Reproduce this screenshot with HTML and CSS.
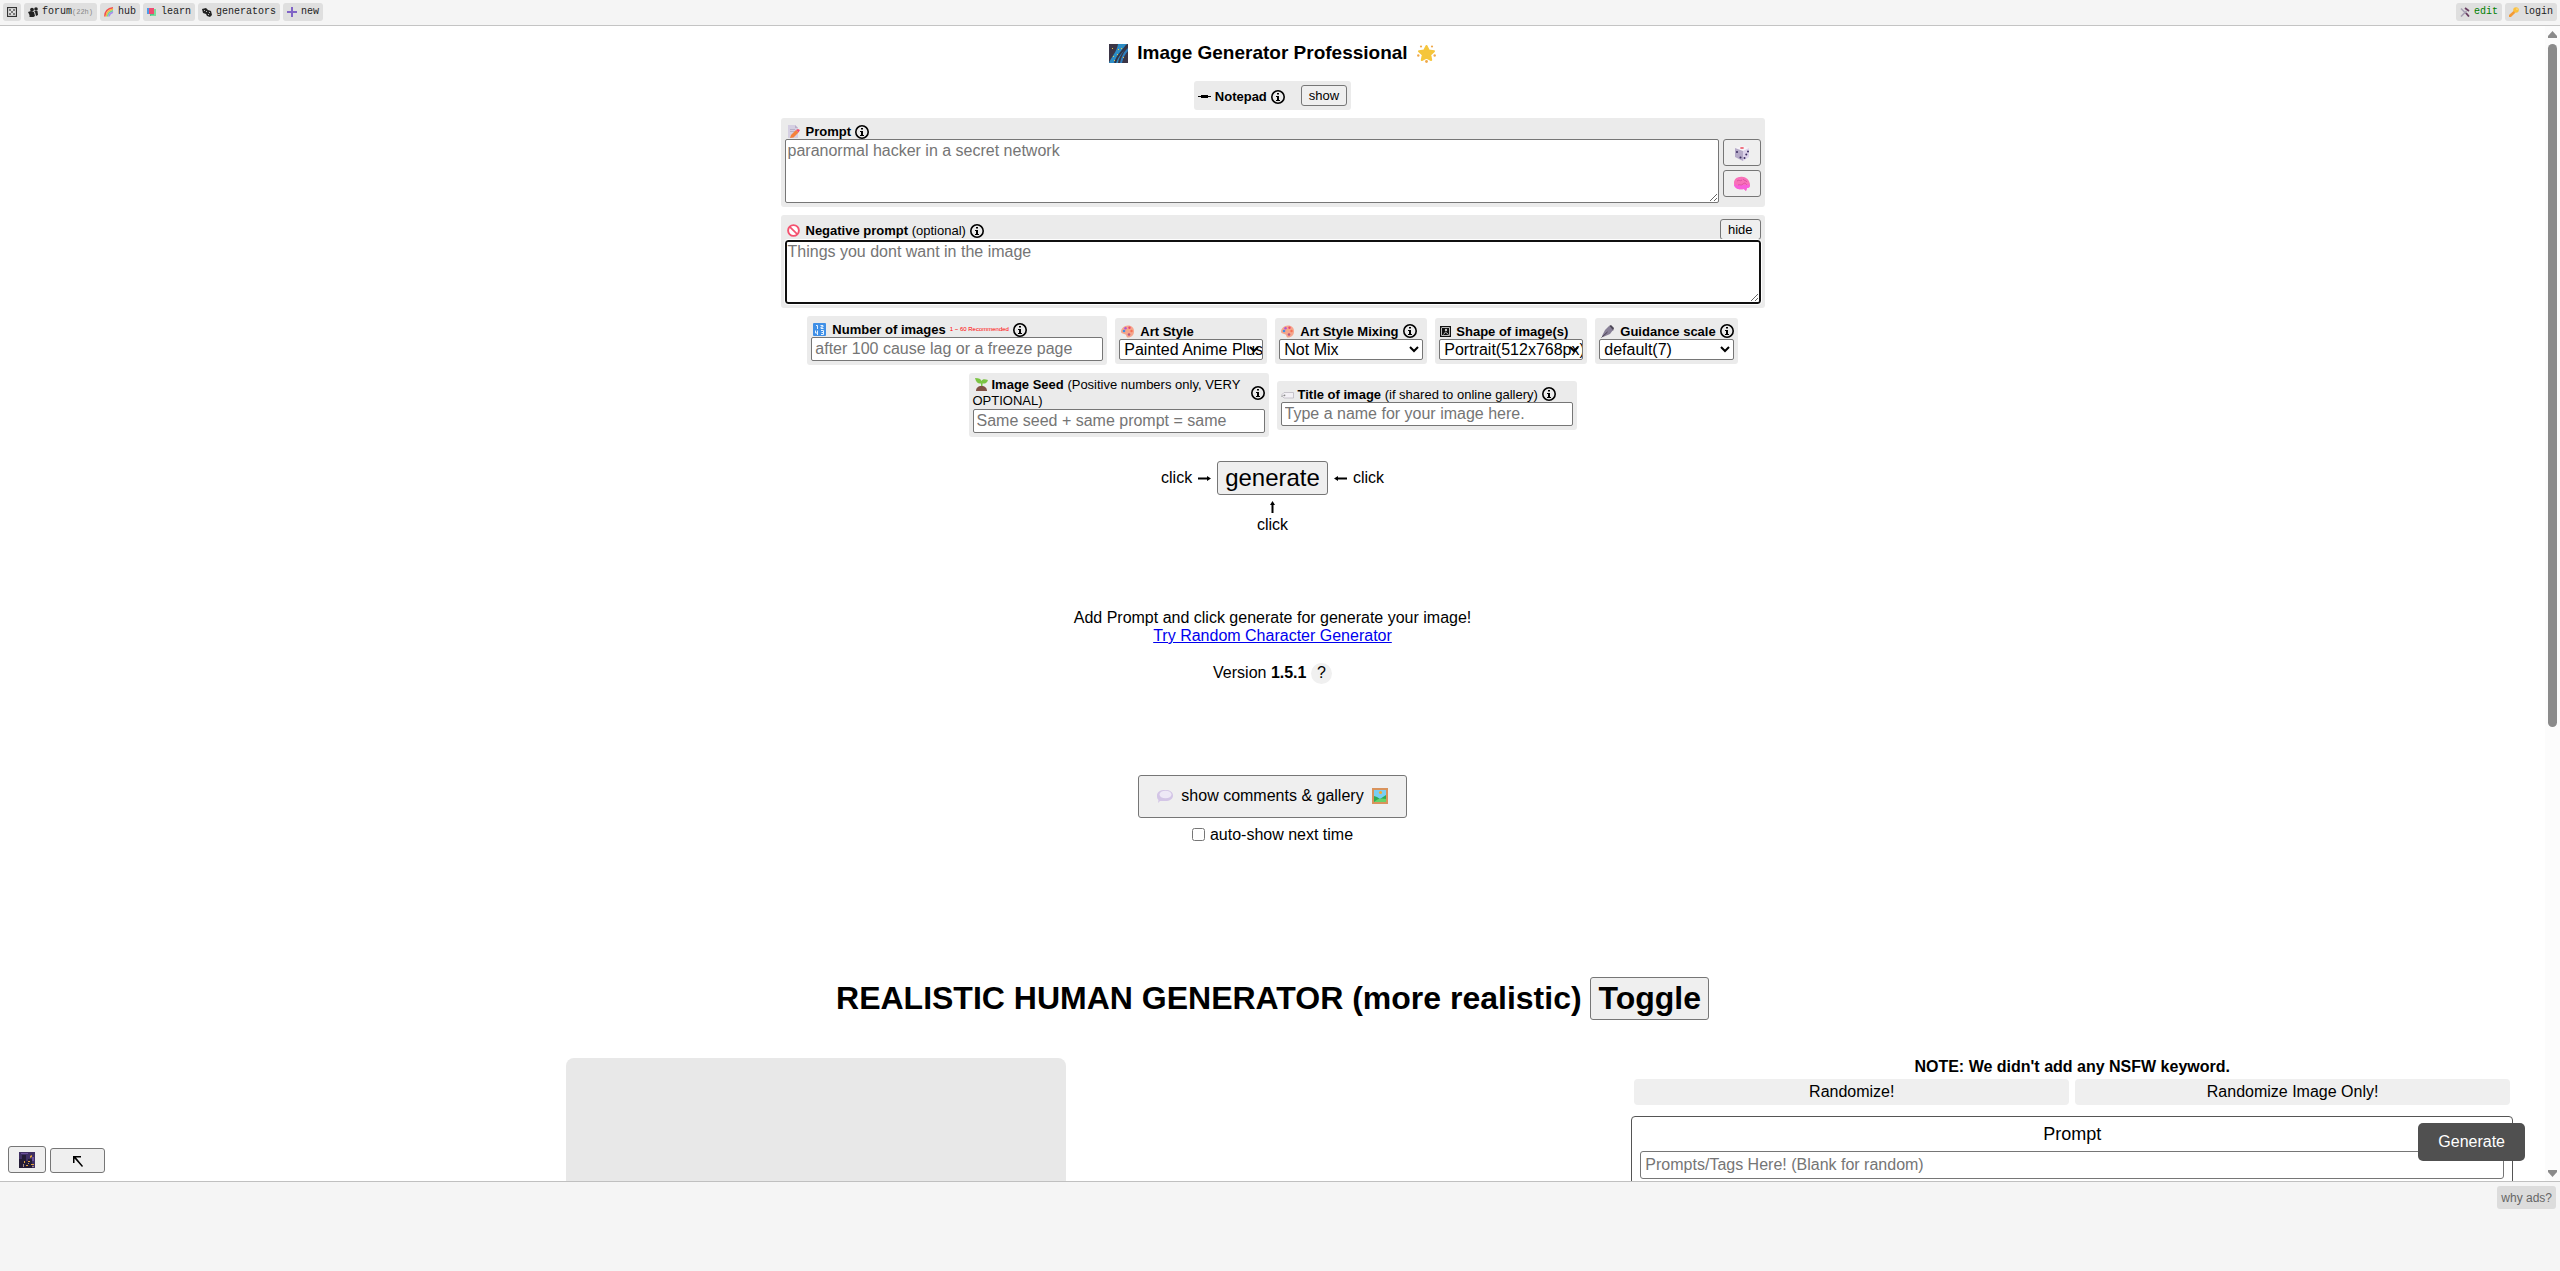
FILE: index.html
```html
<!DOCTYPE html>
<html lang="en">
<head>
  <meta charset="UTF-8">
  <meta name="viewport" content="width=device-width, initial-scale=1.0">
  <title>Image Generator Professional</title>
  <link rel="stylesheet" href="styles.css">
</head>
<body>
  <!-- shared icons -->
  <svg class="sprite" aria-hidden="true">
    <symbol id="info" viewBox="0 0 14 14"><circle cx="7" cy="7" r="6.2" fill="none" stroke="#000" stroke-width="1.6"/><path d="M6 3h2v1.6H6zM5 6h3v4h1v1H5v-1h1V7H5z"/></symbol>
    <symbol id="die" viewBox="0 0 9 9"><rect x=".5" y=".5" width="8" height="8" fill="none" stroke="#333"/><path fill="#333" d="M2 2h1.4v1.4H2zM5.600 2H7v1.400H5.600zM2 5.600h1.400V7H2zM5.600 5.600H7V7H5.600zM3.800 3.800h1.400v1.400H3.800z"/></symbol>
    <symbol id="people" viewBox="0 0 10 10"><g fill="#222"><circle cx="4" cy="2.600" r="1.900"/><circle cx="8" cy="2" r="1.800"/><path d="M0 5l3-1 3 1 1 4-1.500 1H1.500V8zM6 4h3.500l.5 4-2 1-1-4z"/></g></symbol>
    <symbol id="rainbow" viewBox="0 0 10 10"><g fill="none" stroke-width="1.500"><path stroke="#f2504f" d="M.8 9.500Q.8 2 9 .8"/><path stroke="#fbb53c" d="M2.200 9.500Q2.500 3.500 9 2.300"/><path stroke="#6cd49a" d="M3.600 9.500Q4 5 9 3.800"/><path stroke="#a98cf0" d="M5 9.500Q5.500 6 9 5.200"/></g></symbol>
    <symbol id="books" viewBox="0 0 10 10"><path fill="#4a9be8" d="M0 1h4v6H0z"/><path fill="#53c58a" d="M3 3h6v6H3z"/><path fill="#ef4d72" d="M2 1h5v6H2z"/><path fill="#7bdc9b" d="M7 2h2v7H4V8h3z"/></symbol>
    <symbol id="generators" viewBox="0 0 10 10"><path fill="#222" d="M0 2l4-1 2 2 3 1 1 4-2 2-3-1-1-2-3-1z"/><path fill="#bbb" d="M2 3h1v1H2zM4 4h1v1H4zM7 5h1v1H7zM6 7h1v1H6z"/></symbol>
    <symbol id="plus" viewBox="0 0 10 10"><path fill="#8064c6" d="M4 0h2v4h4v2H6v4H4V6H0V4h4z"/></symbol>
    <symbol id="tools" viewBox="0 0 10 10"><path fill="none" stroke="#a9a1b5" stroke-width="1.600" d="M1 1.500l7.500 7.500M1 9.500L6.500 4"/><path fill="none" stroke="#6b3f63" stroke-width="1.800" d="M5 1l4 3M6 6l3 3.500"/></symbol>
    <symbol id="key" viewBox="0 0 10 10"><circle cx="7" cy="3" r="2.800" fill="#fbc13d"/><circle cx="8" cy="2" r=".6" fill="#fff"/><path fill="#f49b35" d="M4.500 4l1.800 1.700L2 10H0V8z"/></symbol>
    <symbol id="galaxy" viewBox="0 0 19 19"><path fill="#3b3546" d="M0 0h19v19H0z"/><path fill="#2c8cc4" d="M9 0h9C15 8 10 12 9 19H0C2 13 8 8 9 0z"/><path fill="none" stroke="#334" stroke-width="2" d="M18 1C14 7 8 11 6 19"/><path fill="#2f7fbe" d="M17 6l2-2v3c-3 3-5 7-6 12h-2c1-5 3-10 6-13z"/><path fill="#e3c94a" d="M3 4h1v1H3zM12 4h1v1h-1zM8 10h1v1H8zM4 12h1v1H4zM5 16h1v1H5zM14 13h1v1h-1zM9 5h1v1H9z"/></symbol>
    <symbol id="star" viewBox="0 0 19 19"><path fill="#f5c63c" stroke="#f5c63c" stroke-width="2" stroke-linejoin="round" d="M9.500 2l2.300 4.500 5.200.7-3.800 3.600 1 5.200-4.700-2.500-4.700 2.500 1-5.200L2 7.200l5.200-.7z"/><g fill="#efa94a"><circle cx="4" cy="2.500" r="1.100"/><circle cx="15" cy="2.500" r="1.100"/><circle cx="1.300" cy="11.500" r="1.200"/><circle cx="17.700" cy="11.500" r="1.200"/><circle cx="9.500" cy="17.500" r="1.400"/></g></symbol>
    <symbol id="pen" viewBox="0 0 13 13"><path d="M0 6h2v1H0zM3 5h7v3H3zM2 6h1v1H2zM10 6h3v1h-3z"/></symbol>
    <symbol id="memo" viewBox="0 0 13 13"><path fill="#d5cfe2" d="M1 0h7l3 3v10H1z"/><path fill="#b8aec9" d="M8 0l3 3H8z"/><path stroke="#b8b0c6" d="M3 4.500h5M3 6.500h5"/><path fill="#f5813b" d="M4 10l5-5 2.500 2.500-5 5L3 13z"/><path fill="#ef4c6a" d="M9 5l2-1 2 1-1.500 2.500z"/></symbol>
    <symbol id="ban" viewBox="0 0 13 13"><circle cx="6.500" cy="6.500" r="5.400" fill="#fff" stroke="#f4526f" stroke-width="1.900"/><path stroke="#f4526f" stroke-width="1.700" d="M2.800 2.800l7.400 7.400"/></symbol>
    <symbol id="numbers" viewBox="0 0 13 13"><rect width="13" height="13" rx="1" fill="#3f8fe6"/><path fill="none" stroke="#e6f3ff" d="M3 2.500h1.500V6M7.500 2.500H10V4H8v1.500h2.500M2.500 7.500V10H5M4.500 7.500V12M8 7.500h2.500v4H8M8.500 9.500h2"/></symbol>
    <symbol id="palette" viewBox="0 0 13 13"><path fill="#f5a58c" d="M7 .5c4 0 6 2.500 6 6s-2.500 6-6 6c-2 0-1-2-2.500-3S0 9 0 6.500s3-6 7-6z"/><circle cx="3" cy="6" r="1.300" fill="#3d8fe4"/><circle cx="4.500" cy="3.200" r="1.200" fill="#ab55d6"/><circle cx="8.500" cy="2.800" r="1.200" fill="#ef4668"/><circle cx="10.500" cy="6" r="1.200" fill="#f46f53"/><circle cx="8" cy="9.500" r="1.300" fill="#b6577e"/></symbol>
    <symbol id="frame" viewBox="0 0 13 13"><path fill="#111" d="M1 1h11v11H1z"/><path fill="none" stroke="#bbb" d="M3 2.500h7.500v8H2.500v-8M4.500 9.500L6.500 7l3 2.500"/><circle cx="7" cy="5" r="1.200" fill="#ccc"/></symbol>
    <symbol id="nib" viewBox="0 0 13 13"><path fill="#4c4656" d="M8 1l2-1 3 3-1 3z"/><path fill="#877f96" d="M4 5l4-4 4 4-3 4-7 3-1-1z"/><path stroke="#373040" stroke-width=".8" d="M.5 12.500L6.500 7"/></symbol>
    <symbol id="seedling" viewBox="0 0 13 13"><path fill="#7bc443" d="M0 0c4 0 6 1 6.500 3C7.500 1 9.500 1 13 2c-1 3-3 4-5.500 3.500V9H6V5.500C3 6 1 4 0 0z"/><path fill="#805044" d="M1 13c0-3 2-5 5.500-5S12 10 12 13z"/></symbol>
    <symbol id="tag" viewBox="0 0 13 13"><path fill="#f3f1f5" stroke="#bdb9c2" stroke-width=".8" d="M3 4.500h9.500v5.500H3L1 8V6.500z"/><circle cx="3.500" cy="7.300" r=".9" fill="#888"/><path stroke="#aaa" stroke-width=".8" d="M0 8.500l3-1"/></symbol>
    <symbol id="dice" viewBox="0 0 16 16"><path fill="#f6f3f8" d="M1 3l7-2 7 2-6 3z"/><path fill="#b5aac8" d="M1 3l8 3v10l-8-4z"/><path fill="#ddd3ea" d="M9 6l6-3v9l-6 4z"/><ellipse cx="8" cy="3" rx="2" ry="1" fill="#ee6a78"/><g fill="#3a2c60"><circle cx="3" cy="7" r="1"/><circle cx="6.500" cy="12.500" r="1"/><circle cx="14" cy="6.500" r="1"/><circle cx="12.300" cy="9.500" r="1"/><circle cx="10.500" cy="13" r="1"/></g></symbol>
    <symbol id="brain" viewBox="0 0 16 16"><path fill="#f871b8" d="M0 7c0-4 3-6 6-6 5-1 9 2 10 7 0 3-1 4-3 4l-1 3-2-2c-5 1-10 0-10-6z"/><path fill="#f85fda" d="M0 8c4 3 10 0 16 1 0 2-1 3-3 3l-1 3-2-2C4 14 0 12 0 8z"/><path fill="none" stroke="#d84a9c" stroke-width=".8" d="M3 5c2-2 3 1 5-1M9 3c1 2 3 1 4 3M4 9c2-1 3 1 5-1s3 0 4 1"/></symbol>
    <symbol id="speech" viewBox="0 0 16 16"><path fill="#d3c5e6" d="M8 2c5 0 8 2 8 5.500S13 13 8 13l-5 0-2 2 .5-3C0 11 0 9 0 7.500 0 4 3 2 8 2z"/><ellipse cx="8.500" cy="6.500" rx="6" ry="3.800" fill="#eee8f6"/></symbol>
    <symbol id="picture" viewBox="0 0 16 16"><path fill="#d9935c" d="M0 0h16v16H0z"/><path fill="#79cdf3" d="M2 2h12v12H2z"/><circle cx="8.500" cy="4.500" r="1.600" fill="#f6a92e"/><path fill="#2dab56" d="M2 8l3 1 3 2 6-4v7H2z"/><path fill="#66d36b" d="M2 14c4-4 8-4 12-3v3z"/></symbol>
    <symbol id="night" viewBox="0 0 16 16"><path fill="#3f2f63" d="M0 0h16v16H0z"/><path fill="#241c36" d="M0 7h3V3h4v6h2V7h4v9H0z"/><path fill="#6d519d" d="M2 1h7v1H2zM13 5h2v4h-2z"/><path fill="#e3a33d" d="M11 4l2-1v2l-2 1zM5 9h1v2H5zM9 9h2v1H9zM12 12h3v1h-3zM7 13h2v1H7z"/><path fill="#a08a8d" d="M4 12h1v3H4zM9 11h1v1H9zM13 14h2v1h-2z"/></symbol>
    <symbol id="arrow" viewBox="0 0 13 13"><path d="M0 5.500h9V4l4 2.500L9 9V7.500H0z"/></symbol>
    <symbol id="arrow-up" viewBox="0 0 13 13"><path d="M5.500 13V5H4l2.500-4L9 5H7.500v8z"/></symbol>
    <symbol id="arrow-corner" viewBox="0 0 12 12"><path d="M1 1h8v1.500H4L11 11l-1 1-7.500-8.500V8H1z"/></symbol>
  </svg>

  <nav class="topbar">
    <a class="navButton" href="#" aria-label="random"><svg><use href="#die"/></svg></a>
    <a class="navButton" href="#"><svg><use href="#people"/></svg><span>forum<small>(22h)</small></span></a>
    <a class="navButton" href="#"><svg><use href="#rainbow"/></svg>hub</a>
    <a class="navButton" href="#"><svg><use href="#books"/></svg>learn</a>
    <a class="navButton" href="#"><svg><use href="#generators"/></svg>generators</a>
    <a class="navButton" href="#"><svg><use href="#plus"/></svg>new</a>
    <span class="spacer"></span>
    <a class="navButton edit" href="#"><svg><use href="#tools"/></svg>edit</a>
    <a class="navButton" href="#"><svg><use href="#key"/></svg>login</a>
  </nav>

  <div class="frame">
    <main class="content">
      <h1 class="title"><svg class="bigIcon"><use href="#galaxy"/></svg>Image Generator Professional<svg class="bigIcon"><use href="#star"/></svg></h1>

      <div class="box notepad">
        <div class="boxLabel tight"><svg class="icon"><use href="#pen"/></svg><b>Notepad</b><svg class="info"><use href="#info"/></svg></div>
        <button class="smallButton">show</button>
      </div>

      <div class="box wide">
        <label class="boxLabel" for="prompt"><svg class="icon"><use href="#memo"/></svg><b>Prompt</b><svg class="info"><use href="#info"/></svg></label>
        <div class="promptRow">
          <textarea class="textArea" id="prompt" placeholder="paranormal hacker in a secret network"></textarea>
          <div class="promptButtons">
            <button class="iconButton" aria-label="random prompt"><svg><use href="#dice"/></svg></button>
            <button class="iconButton" aria-label="improve prompt"><svg><use href="#brain"/></svg></button>
          </div>
        </div>
      </div>

      <div class="box wide">
        <div class="labelRow">
          <label class="boxLabel" for="negative"><svg class="icon"><use href="#ban"/></svg><span><b>Negative prompt</b> (optional)</span><svg class="info"><use href="#info"/></svg></label>
          <button class="smallButton">hide</button>
        </div>
        <textarea class="textArea active" id="negative" placeholder="Things you dont want in the image" autofocus></textarea>
      </div>

      <div class="options">
        <div class="box inputBox">
          <label class="boxLabel" for="count"><svg class="icon"><use href="#numbers"/></svg><b>Number of images</b><small class="hint">1 ~ 60 Recommended</small><svg class="info"><use href="#info"/></svg></label>
          <input class="textInput" id="count" placeholder="after 100 cause lag or a freeze page">
        </div>
        <div class="box selectBox">
          <label class="boxLabel" for="style"><svg class="icon"><use href="#palette"/></svg><b>Art Style</b></label>
          <select id="style"><option>Painted Anime Plus</option></select>
        </div>
        <div class="box selectBox">
          <label class="boxLabel" for="mixing"><svg class="icon"><use href="#palette"/></svg><b>Art Style Mixing</b><svg class="info"><use href="#info"/></svg></label>
          <select id="mixing"><option>Not Mix</option></select>
        </div>
        <div class="box selectBox">
          <label class="boxLabel tight" for="shape"><svg class="icon"><use href="#frame"/></svg><b>Shape of image(s)</b></label>
          <select id="shape"><option>Portrait(512x768px)</option></select>
        </div>
        <div class="box">
          <label class="boxLabel" for="scale"><svg class="icon"><use href="#nib"/></svg><b>Guidance scale</b><svg class="info"><use href="#info"/></svg></label>
          <select id="scale"><option>default(7)</option></select>
        </div>
      </div>

      <div class="options">
        <div class="box inputBox">
          <label class="boxLabel between" for="seed"><span><svg class="icon inline"><use href="#seedling"/></svg><b>Image Seed</b> (Positive numbers only, VERY OPTIONAL)</span><svg class="info"><use href="#info"/></svg></label>
          <input class="textInput" id="seed" placeholder="Same seed + same prompt = same">
        </div>
        <div class="box inputBox">
          <label class="boxLabel tight" for="name"><svg class="icon"><use href="#tag"/></svg><span><b>Title of image</b> (if shared to online gallery)</span><svg class="info"><use href="#info"/></svg></label>
          <input class="textInput" id="name" placeholder="Type a name for your image here.">
        </div>
      </div>

      <div class="generateRow">
        click <svg class="icon"><use href="#arrow"/></svg>
        <button class="generateButton">generate</button>
        <svg class="icon flip"><use href="#arrow"/></svg> click
      </div>
      <div class="below"><svg class="icon"><use href="#arrow-up"/></svg><span>click</span></div>

      <div class="about">
        Add Prompt and click generate for generate your image!<br>
        <a href="#">Try Random Character Generator</a>
        <div class="version">Version <b>1.5.1</b> <button class="helpButton">?</button></div>
      </div>

      <button class="commentsButton"><svg><use href="#speech"/></svg>show comments &amp; gallery<svg><use href="#picture"/></svg></button>
      <label class="autoShow"><input type="checkbox">auto-show next time</label>

      <h2 class="heading">REALISTIC HUMAN GENERATOR (more realistic) <button>Toggle</button></h2>

      <div class="human">
        <div class="preview"></div>
        <div class="settings">
          <b>NOTE: We didn't add any NSFW keyword.</b>
          <div class="randomRow">
            <button>Randomize!</button>
            <button>Randomize Image Only!</button>
          </div>
          <div class="promptPanel">
            <label for="tags">Prompt</label>
            <input id="tags" placeholder="Prompts/Tags Here! (Blank for random)">
          </div>
        </div>
      </div>
    </main>

    <div class="scrollbar" aria-hidden="true">
      <svg viewBox="0 0 9 7"><path d="M4.500 0L9 5v2H0V5z"/></svg>
      <div class="track"><div class="thumb"></div></div>
      <svg viewBox="0 0 9 7"><path d="M4.500 7L9 2V0H0v2z"/></svg>
    </div>

    <div class="corner">
      <button class="iconButton" aria-label="theme"><svg><use href="#night"/></svg></button>
      <button class="cornerButton" aria-label="back to top"><svg><use href="#arrow-corner"/></svg></button>
    </div>
    <button class="floating">Generate</button>
  </div>

  <footer class="ads"><button class="whyAds">why ads?</button></footer>
</body>
</html>
```
FILE: styles.css
```css
* {
  box-sizing: border-box;
}
body {
  display: flex;
  flex-direction: column;
  height: 100vh;
  margin: 0;
  font-family: "Liberation Sans", Arial, sans-serif;
  font-size: 16px;
  line-height: 18px;
  color: black;
  background-color: white;
}
button, input, select, textarea {
  font-family: inherit;
  font-size: 16px;
}
button {
  padding: 1px 7px;
  border: 1px solid #767676;
  border-radius: 3px;
  background-color: #efefef;
  color: black;
}
svg {
  flex: none;
}
.sprite {
  position: absolute;
  width: 0;
  height: 0;
}

/* top bar */
.topbar {
  display: flex;
  gap: 3px;
  height: 26px;
  flex: none;
  padding: 3px;
  background-color: #f5f5f5;
  border-bottom: 1px solid #c4c4c4;
}
.navButton {
  display: flex;
  align-items: center;
  gap: 4px;
  height: 18px;
  padding: 0 4px;
  border-radius: 3px;
  background-color: #dfdfdf;
  color: #222;
  font-family: "Liberation Mono", monospace;
  font-size: 10px;
  text-decoration: none;
}
.navButton svg {
  width: 10px;
  height: 10px;
}
.navButton small {
  font-size: 7px;
  color: #888;
}
.edit {
  color: green;
}
.spacer {
  flex: 1;
}

.frame {
  position: relative;
  display: flex;
  flex: 1;
  min-height: 0;
}
.content {
  flex: 1;
  min-width: 0;
  overflow: hidden;
  display: flex;
  flex-direction: column;
  align-items: center;
}
.content > * {
  flex: none;
}
.title {
  display: flex;
  align-items: center;
  gap: 9px;
  margin: 16px 0 17px;
  font-size: 19px;
  line-height: 22px;
}
.bigIcon {
  width: 19px;
  height: 19px;
}

/* grey option boxes */
.box {
  padding: 4px;
  border-radius: 3px;
  background-color: #ebebeb;
}
.boxLabel {
  display: flex;
  align-items: center;
  gap: 4px;
  padding: 2px 0 0 2px;
  font-size: 13px;
  line-height: 15px;
}
.icon {
  width: 13px;
  height: 13px;
}
.icon + b, .icon + span {
  margin-left: 2px;
}
.info {
  width: 14px;
  height: 14px;
}
.inline {
  margin: 0 4px 0 2px;
  vertical-align: -2px;
}
.inline + b {
  margin-left: 0;
}
.tight {
  padding-left: 0;
}
.tight .icon + b, .tight .icon + span {
  margin-left: 0;
}
.between {
  justify-content: space-between;
  padding: 0;
  line-height: 16px;
}
.hint {
  font-size: 6px;
  color: red;
}
.notepad {
  display: flex;
  align-items: center;
  gap: 16px;
  margin-bottom: 8px;
}
.smallButton {
  font-size: 13px;
  height: 21px;
}
.wide {
  width: 984px;
  max-width: 100%;
  margin-bottom: 8px;
}
.labelRow {
  display: flex;
  align-items: center;
  justify-content: space-between;
}
.textArea {
  display: block;
  width: 100%;
  height: 64px;
  margin: 0;
  padding: 2px;
  border: 1px solid #767676;
  border-radius: 2px;
}
.active {
  position: relative;
  border: 2px solid #101010;
  border-radius: 3px;
  padding: 1px;
  outline: 1px solid white;
}
.promptRow {
  display: flex;
  gap: 4px;
}
.promptButtons {
  display: flex;
  flex-direction: column;
  gap: 4px;
}
.iconButton {
  display: flex;
  align-items: center;
  justify-content: center;
  width: 38px;
  height: 27px;
  padding: 0;
}
.iconButton svg {
  width: 16px;
  height: 16px;
}
.options {
  display: flex;
  flex-wrap: wrap;
  align-items: center;
  justify-content: center;
  gap: 8px;
  margin-bottom: 8px;
}
.inputBox {
  width: 300px;
}
.selectBox {
  width: 152px;
}
.textInput {
  display: block;
  width: 100%;
  height: 24px;
  padding: 1px 3px;
  border: 1px solid #767676;
  border-radius: 2px;
}
select {
  display: block;
  width: 100%;
  height: 21px;
  padding: 0 0 0 4px;
  appearance: none;
  border: 1px solid #767676;
  border-radius: 2px;
  color: black;
  background: white url("data:image/svg+xml,%3Csvg xmlns='http://www.w3.org/2000/svg' width='10' height='7'%3E%3Cpath d='M1 1l4 4 4-4' fill='none' stroke='black' stroke-width='2'/%3E%3C/svg%3E") no-repeat right 3px center;
}

/* generate button with arrows */
.generateRow {
  display: flex;
  align-items: center;
  gap: 6px;
  margin-top: 16px;
}
.generateButton {
  height: 34px;
  font-size: 24px;
}
.flip {
  transform: scaleX(-1);
}
.below {
  display: flex;
  flex-direction: column;
  align-items: center;
  gap: 3px;
  padding-top: 5px;
}
.below .icon + span {
  margin: 0;
}
.about {
  margin-top: 75px;
  text-align: center;
}
.version {
  margin-top: 17px;
  line-height: 21px;
}
.helpButton {
  width: 21px;
  height: 21px;
  padding: 0;
  border: none;
  border-radius: 50%;
  background-color: #f0f0f0;
}
.commentsButton {
  display: flex;
  align-items: center;
  gap: 8px;
  height: 43px;
  margin-top: 91px;
  padding: 0 18px;
}
.commentsButton svg {
  width: 16px;
  height: 16px;
}
.autoShow {
  display: flex;
  align-items: center;
  gap: 5px;
  margin-top: 8px;
}
.autoShow input {
  width: 13px;
  height: 13px;
  margin: 0;
}
.heading {
  margin: 133px 0 38px;
  font-size: 32px;
  line-height: 43px;
}
.heading button {
  height: 43px;
  font-size: 32px;
  font-weight: bold;
}

/* realistic human generator */
.human {
  display: grid;
  grid-template-columns: 16fr 9fr;
  gap: 32px;
  width: 100%;
  padding: 0 32px;
}
.preview {
  justify-self: center;
  width: 500px;
  max-width: 100%;
  height: 500px;
  border-radius: 8px;
  background-color: #e8e8e8;
}
.settings {
  text-align: center;
}
.randomRow {
  display: flex;
  gap: 6px;
  padding: 3px 3px 0;
}
.randomRow button {
  flex: 1;
  height: 26px;
  border: none;
  border-radius: 4px;
}
.promptPanel {
  height: 400px;
  margin-top: 11px;
  padding: 7px 8px;
  border: 1px solid #555;
  border-radius: 4px;
}
.promptPanel label {
  display: block;
  margin-bottom: 6px;
  font-size: 18px;
  line-height: 21px;
}
.promptPanel input {
  display: block;
  width: 100%;
  height: 28px;
  padding: 1px 4px;
  border: 1px solid #767676;
  border-radius: 3px;
}

.scrollbar {
  display: flex;
  flex-direction: column;
  align-items: center;
  width: 15px;
  padding: 5px 0 4px;
  background-color: #fcfcfc;
}
.scrollbar svg {
  width: 9px;
  height: 7px;
  fill: #8b8b8b;
}
.track {
  flex: 1;
  margin: 6px 0;
}
.thumb {
  width: 9px;
  height: 61%;
  border-radius: 5px;
  background-color: #8b8b8b;
}

/* buttons floating over the page */
.corner {
  position: absolute;
  left: 8px;
  bottom: 8px;
  display: flex;
  align-items: flex-end;
  gap: 4px;
}
.cornerButton {
  display: flex;
  align-items: center;
  justify-content: center;
  width: 55px;
  height: 25px;
}
.cornerButton svg {
  width: 12px;
  height: 12px;
}
.floating {
  position: absolute;
  right: 35px;
  bottom: 20px;
  height: 38px;
  padding: 0 20px;
  border: none;
  border-radius: 5px;
  background-color: #505050;
  color: white;
}
.ads {
  display: flex;
  align-items: flex-start;
  justify-content: flex-end;
  flex: none;
  height: 90px;
  padding: 4px;
  border-top: 1px solid #c0c0c0;
  background-color: #f5f5f5;
}
.whyAds {
  height: 23px;
  padding: 0 4px;
  border: none;
  background-color: #dcdcdc;
  color: #666;
  font-size: 12px;
}
```
